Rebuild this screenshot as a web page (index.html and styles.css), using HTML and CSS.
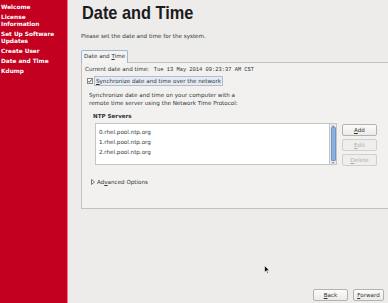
FILE: index.html
```html
<!DOCTYPE html>
<html lang="en">
<head>
  <meta charset="UTF-8" />
  <title>Date and Time</title>
  <link rel="stylesheet" href="styles.css">
</head>
<body>

  <div class="sidebar">
    <div class="step">Welcome</div>
    <div class="step">License<br>Information</div>
    <div class="step">Set Up Software<br>Updates</div>
    <div class="step">Create User</div>
    <div class="step">Date and Time</div>
    <div class="step">Kdump</div>
  </div>

  <div class="main">
    <h1>Date and Time</h1>
    <p class="intro">Please set the date and time for the system.</p>

    <div class="notebook">
      <div class="tabs">
        <div class="tab">Date and <u>T</u>ime</div>
      </div>
      <div class="page">
        <div class="current">Current date and time: <span class="clock">Tue 13 May 2014 09:23:37 AM CST</span></div>
        <div class="sync">
          <svg class="check" width="6" height="6" viewBox="0 0 6 6">
            <rect x="0.5" y="0.5" width="5" height="5" fill="#fff" stroke="#8a8884"/>
            <path d="M1.4 3.1 L2.5 4.3 L4.6 1.5" fill="none" stroke="#2e3436" stroke-width="0.9"/>
          </svg>
          <span class="sync-label"><u>S</u>ynchronize date and time over the network</span>
        </div>
        <p class="desc">Synchronize date and time on your computer with a<br>remote time server using the Network Time Protocol:</p>
        <div class="ntp-title">NTP Servers</div>
        <div class="ntp">
          <div class="list">
            <div class="list-items">
              <div>0.rhel.pool.ntp.org</div>
              <div>1.rhel.pool.ntp.org</div>
              <div>2.rhel.pool.ntp.org</div>
            </div>
            <div class="scrollbar">
              <span class="arrow">&#9652;</span>
              <span class="thumb"></span>
              <span class="arrow">&#9662;</span>
            </div>
          </div>
          <div class="ntp-buttons">
            <button class="btn"><u>A</u>dd</button>
            <button class="btn" disabled><u>E</u>dit</button>
            <button class="btn" disabled><u>D</u>elete</button>
          </div>
        </div>
        <div class="advanced">
          <svg class="expander" width="4" height="6" viewBox="0 0 4 6">
            <path d="M0.5 0.5 L3.5 3 L0.5 5.5 Z" fill="#fff" stroke="#555" stroke-width="0.8"/>
          </svg>
          <span>Ad<u>v</u>anced Options</span>
        </div>
      </div>
    </div>

    <div class="nav">
      <button class="btn back"><u>B</u>ack</button>
      <button class="btn forward"><u>F</u>orward</button>
    </div>
  </div>

  <svg class="pointer" width="6" height="9" viewBox="0 0 6 9">
    <path d="M0.5 0.5 L0.5 7.5 L2.2 5.8 L3.4 8.5 L4.3 8.1 L3.2 5.4 L5.5 5.4 Z" fill="#111" stroke="#fff" stroke-width="0.6"/>
  </svg>

</body>
</html>
```

FILE: styles.css
```css
* { margin: 0; padding: 0; box-sizing: border-box; }

body {
  width: 388px;
  height: 303px;
  display: flex;
  font-family: 'DejaVu Sans', sans-serif;
  font-size: 5.6px;
  color: #2e3436;
  background: #edeceb;
  overflow: hidden;
  position: relative;
}

u { text-decoration: underline; text-underline-offset: 1px; }

/* left steps */
.sidebar {
  width: 68px;
  background: #c3001f;
  border-right: 1px solid #e97a8a;
  padding: 4px 0 0 1px;
  color: #fff;
  font-weight: bold;
  font-size: 5.8px;
  line-height: 7px;
}

.step { margin-bottom: 3px; }

.main {
  flex: 1;
  display: flex;
  flex-direction: column;
  padding-left: 13px;
}

h1 {
  font-size: 19px;
  font-family: 'Liberation Sans', sans-serif;
  color: #1b1b1b;
  line-height: 22px;
  margin: 2px 0 0 1px;
  transform: scaleX(0.86);
  transform-origin: left center;
}

.intro { margin: 8px 0 0; line-height: 8px; }

.notebook { margin-top: 10px; }

.tabs { display: flex; }

.tab {
  width: 47px;
  height: 13px;
  line-height: 11px;
  padding-left: 2px;
  background: #f4f3f2;
  border: 1px solid #9db8d2;
  border-bottom: none;
  border-radius: 2px 2px 0 0;
  margin-bottom: -1px;
  position: relative;
}

.page {
  height: 147px;
  background: #f2f1f0;
  border: 1px solid #c4c2bd;
  border-right: none;
  padding: 2px 0 0 3px;
}

.current { line-height: 8px; }

.clock {
  font-family: 'Liberation Mono', monospace;
  font-size: 5.4px;
  margin-left: 3px;
}

.sync {
  display: flex;
  align-items: center;
  gap: 1px;
  margin: 2px 0 0 2px;
}

.sync-label {
  height: 10px;
  line-height: 8px;
  padding: 0 1px;
  border: 1px solid #aebfd4;
  background: #e6ebf2;
}

.desc {
  margin: 5px 0 0 4px;
  line-height: 8px;
}

.ntp-title {
  font-weight: bold;
  margin: 5px 0 0 8px;
  line-height: 8px;
}

.ntp {
  display: flex;
  align-items: flex-start;
  margin: 3px 0 0 10px;
}

.list {
  display: flex;
  height: 42px;
}

.list-items {
  width: 235px;
  background: #fff;
  border: 1px solid #c7c5c1;
  padding: 3px 0 0 3px;
  line-height: 10px;
}

.scrollbar {
  width: 7px;
  display: flex;
  flex-direction: column;
  align-items: center;
  border: 1px solid #c7c5c1;
  border-left: none;
  background: #e9e8e6;
}

.arrow {
  font-size: 4px;
  line-height: 3px;
  color: #777;
}

.thumb {
  flex: 1;
  width: 5px;
  background: #8db1de;
  border: 1px solid #6f97c9;
  border-radius: 1px;
}

.ntp-buttons {
  display: flex;
  flex-direction: column;
  gap: 3px;
  margin: 1px 0 0 5px;
}

.btn {
  width: 35px;
  height: 12px;
  font-family: 'DejaVu Sans', sans-serif;
  font-size: 5.6px;
  color: #2e3436;
  background: linear-gradient(#fbfbfa, #ebeae8);
  border: 1px solid #b4b2ae;
  border-radius: 2px;
}

.btn:disabled {
  color: #b0aeaa;
  background: #efeeed;
  border-color: #d1cfcb;
}

.advanced {
  display: flex;
  align-items: center;
  gap: 2px;
  margin: 12px 0 0 6px;
  line-height: 8px;
}

.nav {
  margin-top: auto;
  margin-bottom: 2px;
  display: flex;
  justify-content: flex-end;
  gap: 5px;
  padding-right: 4px;
}

.back { width: 35px; }
.forward { width: 31px; }

.pointer {
  position: absolute;
  left: 264px;
  top: 265px;
}
```
